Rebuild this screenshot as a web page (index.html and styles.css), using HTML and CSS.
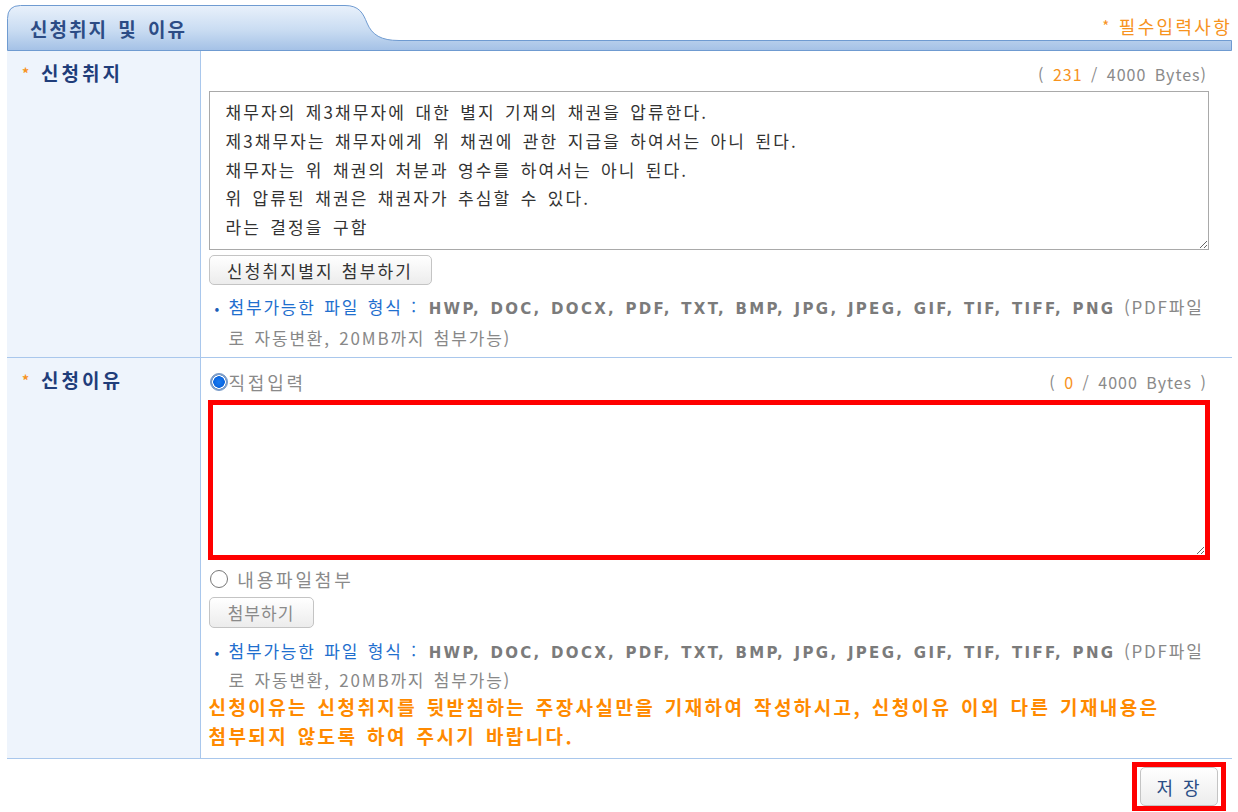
FILE: index.html
```html
<!DOCTYPE html>
<html lang="ko">

<head>
    <meta charset="UTF-8">
    <title>신청취지 및 이유</title>
    <link rel="stylesheet" href="styles.css">
</head>

<body>
    <div class="page">
        <div class="section-head">
            <svg class="head-bg" width="1225" height="46" viewBox="0 0 1225 46">
                <defs>
                    <linearGradient id="tabFill" x1="0" y1="0" x2="0" y2="1">
                        <stop offset="0" stop-color="#e9f1fb"/>
                        <stop offset="0.55" stop-color="#c9dcf2"/>
                        <stop offset="1" stop-color="#a4c1e6"/>
                    </linearGradient>
                </defs>
                <path d="M0.5,45.5 V13.5 Q0.5,0.5 13.5,0.5 H338 C352,0.5 356,8 360,18 C365,30 374,35.5 392,35.5 H1224.5 V45.5 Z"
                      fill="url(#tabFill)" stroke="#6f9bd1" stroke-width="1"/>
            </svg>
            <h2 class="head-title">신청취지 및 이유</h2>
            <span class="required-note"><span class="star">*</span> 필수입력사항</span>
        </div>

        <table class="form-table">
            <tr>
                <th><span class="star">*</span>신청취지</th>
                <td class="purpose-cell">
                    <div class="byte-count">( <em>231</em> / 4000 Bytes)</div>
                    <textarea class="text-input purpose-input">채무자의 제3채무자에 대한 별지 기재의 채권을 압류한다.
제3채무자는 채무자에게 위 채권에 관한 지급을 하여서는 아니 된다.
채무자는 위 채권의 처분과 영수를 하여서는 아니 된다.
위 압류된 채권은 채권자가 추심할 수 있다.
라는 결정을 구함</textarea>
                    <button class="btn btn-attach-purpose">신청취지별지 첨부하기</button>
                    <p class="file-note"><span class="note-label">첨부가능한 파일 형식 :</span><b>HWP, DOC, DOCX, PDF, TXT, BMP, JPG, JPEG, GIF, TIF, TIFF, PNG</b> (PDF파일로 자동변환, 20MB까지 첨부가능)</p>
                </td>
            </tr>
            <tr>
                <th><span class="star">*</span>신청이유</th>
                <td class="reason-cell">
                    <div class="choice-row">
                        <label class="choice"><input type="radio" name="reasonType" checked>직접입력</label>
                        <span class="byte-count">( <em>0</em> / 4000 Bytes )</span>
                    </div>
                    <textarea class="text-input reason-input highlight"></textarea>
                    <div class="choice-row second">
                        <label class="choice"><input type="radio" name="reasonType"> 내용파일첨부</label>
                    </div>
                    <button class="btn btn-attach" disabled>첨부하기</button>
                    <p class="file-note"><span class="note-label">첨부가능한 파일 형식 :</span><b>HWP, DOC, DOCX, PDF, TXT, BMP, JPG, JPEG, GIF, TIF, TIFF, PNG</b> (PDF파일로 자동변환, 20MB까지 첨부가능)</p>
                    <p class="warning">신청이유는 신청취지를 뒷받침하는 주장사실만을 기재하여 작성하시고, 신청이유 이외 다른 기재내용은 첨부되지 않도록 하여 주시기 바랍니다.</p>
                </td>
            </tr>
        </table>

        <div class="actions">
            <span class="highlight-box"><button class="btn btn-save">저 장</button></span>
        </div>
    </div>
</body>

</html>
```

FILE: styles.css
```css
* {
    box-sizing: border-box;
}

body {
    margin: 0;
    padding: 5px 0 0 7px;
    font-family: "Noto Sans CJK KR", sans-serif;
    color: #666;
    background: #fff;
}

.page {
    width: 1225px;
}

/* section header tab */
.section-head {
    position: relative;
    height: 46px;
    display: flex;
    justify-content: space-between;
    align-items: center;
}

.head-bg {
    position: absolute;
    left: 0;
    top: 0;
}

.head-title {
    position: relative;
    margin: 0 0 0 23px;
    font-size: 19px;
    font-weight: bold;
    letter-spacing: 2px;
    word-spacing: 3px;
    color: #2c4c85;
}

.required-note {
    position: relative;
    font-size: 18px;
    letter-spacing: 2.3px;
    color: #f7931e;
    margin-bottom: 4px;
}

.required-note .star {
    font-size: 15px;
    margin-right: 0;
}

.star {
    color: #f7931e;
    font-size: 14px;
    margin-right: 9px;
    vertical-align: 2px;
}

/* form table */
.form-table {
    width: 1225px;
    border-collapse: collapse;
    border-bottom: 1px solid #a9c7ec;
}

.form-table tr + tr {
    border-top: 1px solid #a9c7ec;
}

.form-table th {
    width: 193px;
    padding: 11px 0 0 15px;
    background: #eef4fc;
    border-right: 1px solid #a9c7ec;
    text-align: left;
    vertical-align: top;
    font-size: 19px;
    line-height: 22px;
    letter-spacing: 3px;
    color: #1f3d7a;
}

.form-table td {
    padding: 11px 12px 5px 8px;
    vertical-align: top;
}

.form-table .reason-cell {
    padding-top: 12px;
    padding-bottom: 8px;
}

.byte-count {
    display: block;
    text-align: right;
    margin-right: 13px;
    font-size: 16px;
    line-height: 24px;
    letter-spacing: 1px;
    word-spacing: 3px;
    color: #8a8a8a;
}

.byte-count em {
    font-style: normal;
    color: #f7931e;
}

.purpose-cell .byte-count {
    margin-bottom: 5px;
}

.text-input {
    display: block;
    width: 1000px;
    padding: 6px 16px;
    border: 1px solid #a9a9a9;
    font-family: "Noto Sans CJK KR", sans-serif;
    font-size: 17px;
    line-height: 28.75px;
    letter-spacing: 2.1px;
    word-spacing: 2.5px;
    color: #333;
    resize: vertical;
}

.purpose-input {
    height: 159px;
}

.reason-input {
    height: 160px;
    margin: 6px 0 0 -1px;
}

.highlight {
    width: 1002px;
    border: 5px solid #f00;
}

/* buttons */
.btn {
    display: block;
    height: 30px;
    padding: 0 10px;
    border: 1px solid #c4c4c4;
    border-radius: 5px;
    background: linear-gradient(#ffffff, #ececec);
    font-family: "Noto Sans CJK KR", sans-serif;
    font-size: 17px;
    letter-spacing: 2.2px;
    word-spacing: 1px;
    color: #333;
}

.btn-attach-purpose {
    width: 223px;
    margin-top: 5px;
}

.btn-attach {
    width: 105px;
    height: 31px;
    margin-top: 6px;
    color: #8a8a8a;
    letter-spacing: 1px;
}

/* file format note */
.file-note {
    max-width: 1002px;
    margin: 7px 0 0;
    padding-left: 20px;
    text-indent: -14px;
    font-size: 17px;
    line-height: 29px;
    letter-spacing: 1.8px;
    word-spacing: 2px;
    color: #888;
}

.file-note::before {
    content: "•";
    display: inline-block;
    width: 14px;
    text-indent: 0;
    color: #1b5eb8;
    font-size: 14px;
}

.note-label {
    margin-right: 11px;
    color: #1f6fce;
}

.file-note b {
    font-family: "DejaVu Sans", sans-serif;
    font-size: 15px;
    line-height: 1;
    letter-spacing: 2.3px;
    word-spacing: 2px;
    color: #7b7b7b;
}

.reason-cell .file-note {
    margin-top: 9px;
    line-height: 28px;
}

/* radio choice */
.choice-row {
    display: flex;
    justify-content: space-between;
    align-items: center;
    height: 24px;
}

.choice-row.second {
    margin-top: 7px;
}

.choice {
    display: flex;
    align-items: center;
    font-size: 18px;
    letter-spacing: 2.8px;
    word-spacing: 1px;
    color: #8a8a8a;
    white-space: pre;
}

.choice input {
    appearance: none;
    width: 18px;
    height: 18px;
    margin: 0 1px 0 1px;
    border: 1.5px solid #777;
    border-radius: 50%;
    background: #fff;
}

.choice input:checked {
    border-color: #7a9cc9;
    background: radial-gradient(circle, #1a7cf2 0, #0a66e0 5.5px, #fff 6px, #fff 6.5px, #7a9cc9 7px);
}

.warning {
    margin: -2px 0 0;
    font-size: 19px;
    font-weight: bold;
    line-height: 29px;
    letter-spacing: 2.4px;
    word-spacing: 2px;
    color: #ff8a00;
    word-break: keep-all;
}

/* save */
.actions {
    display: flex;
    justify-content: flex-end;
    padding: 3px 6px 0 0;
}

.highlight-box {
    display: block;
    padding: 0 3px;
    border: 5px solid #f00;
}

.btn-save {
    width: 78px;
    height: 39px;
    padding: 0;
    font-size: 18px;
    letter-spacing: 2px;
    color: #2b4e86;
}
```
